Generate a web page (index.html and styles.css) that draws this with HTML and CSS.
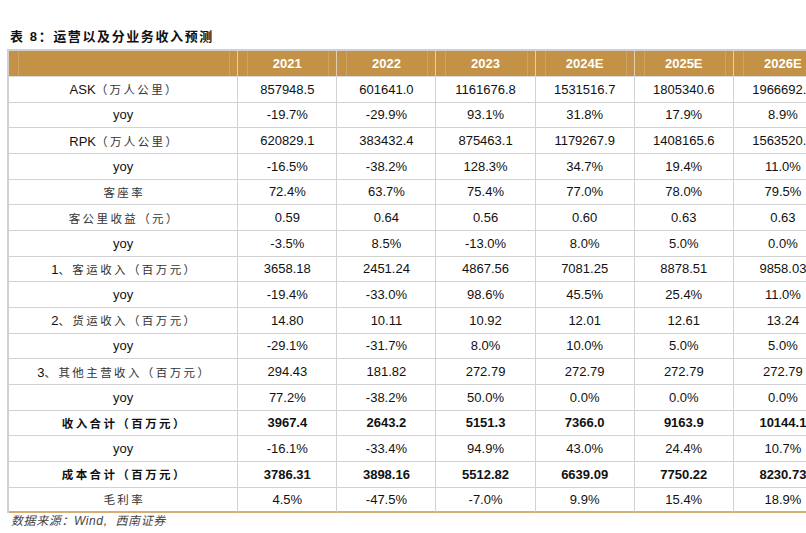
FILE: index.html
```html
<!DOCTYPE html>
<html lang="zh-CN">
<head>
<meta charset="utf-8">
<title>运营以及分业务收入预测</title>
<link rel="stylesheet" href="styles.css">
</head>
<body>
<div class="page">
  <h1 class="title">表 8：运营以及分业务收入预测</h1>
  <table class="grid">
    <colgroup>
      <col class="c-label"><col class="c-num"><col class="c-num"><col class="c-num"><col class="c-num"><col class="c-num"><col class="c-num">
    </colgroup>
    <thead>
      <tr><th></th><th>2021</th><th>2022</th><th>2023</th><th>2024E</th><th>2025E</th><th>2026E</th></tr>
    </thead>
    <tbody>
      <tr><td class="lab">ASK<span class="cn">（万人公里）</span></td><td>857948.5</td><td>601641.0</td><td>1161676.8</td><td>1531516.7</td><td>1805340.6</td><td>1966692.7</td></tr>
      <tr><td class="lab">yoy</td><td>-19.7%</td><td>-29.9%</td><td>93.1%</td><td>31.8%</td><td>17.9%</td><td>8.9%</td></tr>
      <tr><td class="lab">RPK<span class="cn">（万人公里）</span></td><td>620829.1</td><td>383432.4</td><td>875463.1</td><td>1179267.9</td><td>1408165.6</td><td>1563520.1</td></tr>
      <tr><td class="lab">yoy</td><td>-16.5%</td><td>-38.2%</td><td>128.3%</td><td>34.7%</td><td>19.4%</td><td>11.0%</td></tr>
      <tr><td class="lab"><span class="cn">客座率</span></td><td>72.4%</td><td>63.7%</td><td>75.4%</td><td>77.0%</td><td>78.0%</td><td>79.5%</td></tr>
      <tr><td class="lab"><span class="cn">客公里收益（元）</span></td><td>0.59</td><td>0.64</td><td>0.56</td><td>0.60</td><td>0.63</td><td>0.63</td></tr>
      <tr><td class="lab">yoy</td><td>-3.5%</td><td>8.5%</td><td>-13.0%</td><td>8.0%</td><td>5.0%</td><td>0.0%</td></tr>
      <tr><td class="lab">1<span class="cn">、客运收入（百万元）</span></td><td>3658.18</td><td>2451.24</td><td>4867.56</td><td>7081.25</td><td>8878.51</td><td>9858.03</td></tr>
      <tr><td class="lab">yoy</td><td>-19.4%</td><td>-33.0%</td><td>98.6%</td><td>45.5%</td><td>25.4%</td><td>11.0%</td></tr>
      <tr><td class="lab">2<span class="cn">、货运收入（百万元）</span></td><td>14.80</td><td>10.11</td><td>10.92</td><td>12.01</td><td>12.61</td><td>13.24</td></tr>
      <tr><td class="lab">yoy</td><td>-29.1%</td><td>-31.7%</td><td>8.0%</td><td>10.0%</td><td>5.0%</td><td>5.0%</td></tr>
      <tr><td class="lab">3<span class="cn">、其他主营收入（百万元）</span></td><td>294.43</td><td>181.82</td><td>272.79</td><td>272.79</td><td>272.79</td><td>272.79</td></tr>
      <tr><td class="lab">yoy</td><td>77.2%</td><td>-38.2%</td><td>50.0%</td><td>0.0%</td><td>0.0%</td><td>0.0%</td></tr>
      <tr class="bold"><td class="lab"><span class="cn">收入合计（百万元）</span></td><td>3967.4</td><td>2643.2</td><td>5151.3</td><td>7366.0</td><td>9163.9</td><td>10144.1</td></tr>
      <tr><td class="lab">yoy</td><td>-16.1%</td><td>-33.4%</td><td>94.9%</td><td>43.0%</td><td>24.4%</td><td>10.7%</td></tr>
      <tr class="bold"><td class="lab"><span class="cn">成本合计（百万元）</span></td><td>3786.31</td><td>3898.16</td><td>5512.82</td><td>6639.09</td><td>7750.22</td><td>8230.73</td></tr>
      <tr class="last"><td class="lab"><span class="cn">毛利率</span></td><td>4.5%</td><td>-47.5%</td><td>-7.0%</td><td>9.9%</td><td>15.4%</td><td>18.9%</td></tr>
    </tbody>
  </table>
  <p class="source">数据来源：Wind,&nbsp; 西南证券</p>
</div>
</body>
</html>
```

FILE: styles.css
```css
html, body {
  margin: 0;
  padding: 0;
  background: #ffffff;
  overflow: hidden;
}

.page {
  width: 806px;
  height: 533px;
  overflow: hidden;
  font-family: "Liberation Sans", Arial, "Noto Sans CJK SC", sans-serif;
  color: #111;
}

.title {
  margin: 0;
  padding: 29px 0 0 10px;
  height: 16px;
  line-height: 16px;
  font-size: 13px;
  font-weight: bold;
  letter-spacing: 1.6px;
  color: #111;
  font-family: "Liberation Sans", "Noto Sans CJK SC", sans-serif;
}

.grid {
  margin: 4px 0 0 7px;
  border-collapse: separate;
  border-spacing: 0;
  table-layout: fixed;
  width: 826px;
  border-top: 2px solid #d0d0d0;
  border-left: 2px solid #d0d0d0;
}

.c-label { width: 229px; }
.c-num { width: 99px; }

.grid th,
.grid td {
  box-sizing: border-box;
  padding: 0;
  text-align: center;
  white-space: nowrap;
  overflow: hidden;
  font-size: 13px;
}

.grid th {
  height: 26px;
  background-color: #c39246;
  background-image:
    linear-gradient(to right, transparent 9px, rgba(255,255,255,0.16) 9px, rgba(255,255,255,0.16) 10px, transparent 10px),
    linear-gradient(to left, transparent 7px, rgba(255,255,255,0.16) 7px, rgba(255,255,255,0.16) 8px, transparent 8px);
  color: #ffffff;
  font-weight: bold;
  border-right: 1px solid #e3cfae;
  border-bottom: 1px solid #dcdcdc;
}

.grid td {
  height: 25.67px;
  color: #111;
  border-right: 1px solid #d2d2d2;
  border-bottom: 1px solid #d2d2d2;
}

.grid tr.last td {
  border-bottom: 2px solid #d6ad72;
}

.grid tr.bold td {
  font-weight: bold;
}

.lab {
  color: #222;
}

.cn {
  font-family: "Noto Sans CJK SC", sans-serif;
  font-size: 11.5px;
  letter-spacing: 2.4px;
  margin-right: -2.4px;
  color: #333;
}

.bold .cn {
  color: #111;
}

.source {
  margin: 0;
  padding-left: 11px;
  line-height: 16px;
  font-size: 12px;
  font-style: italic;
  color: #444;
  letter-spacing: 0.6px;
}
```
